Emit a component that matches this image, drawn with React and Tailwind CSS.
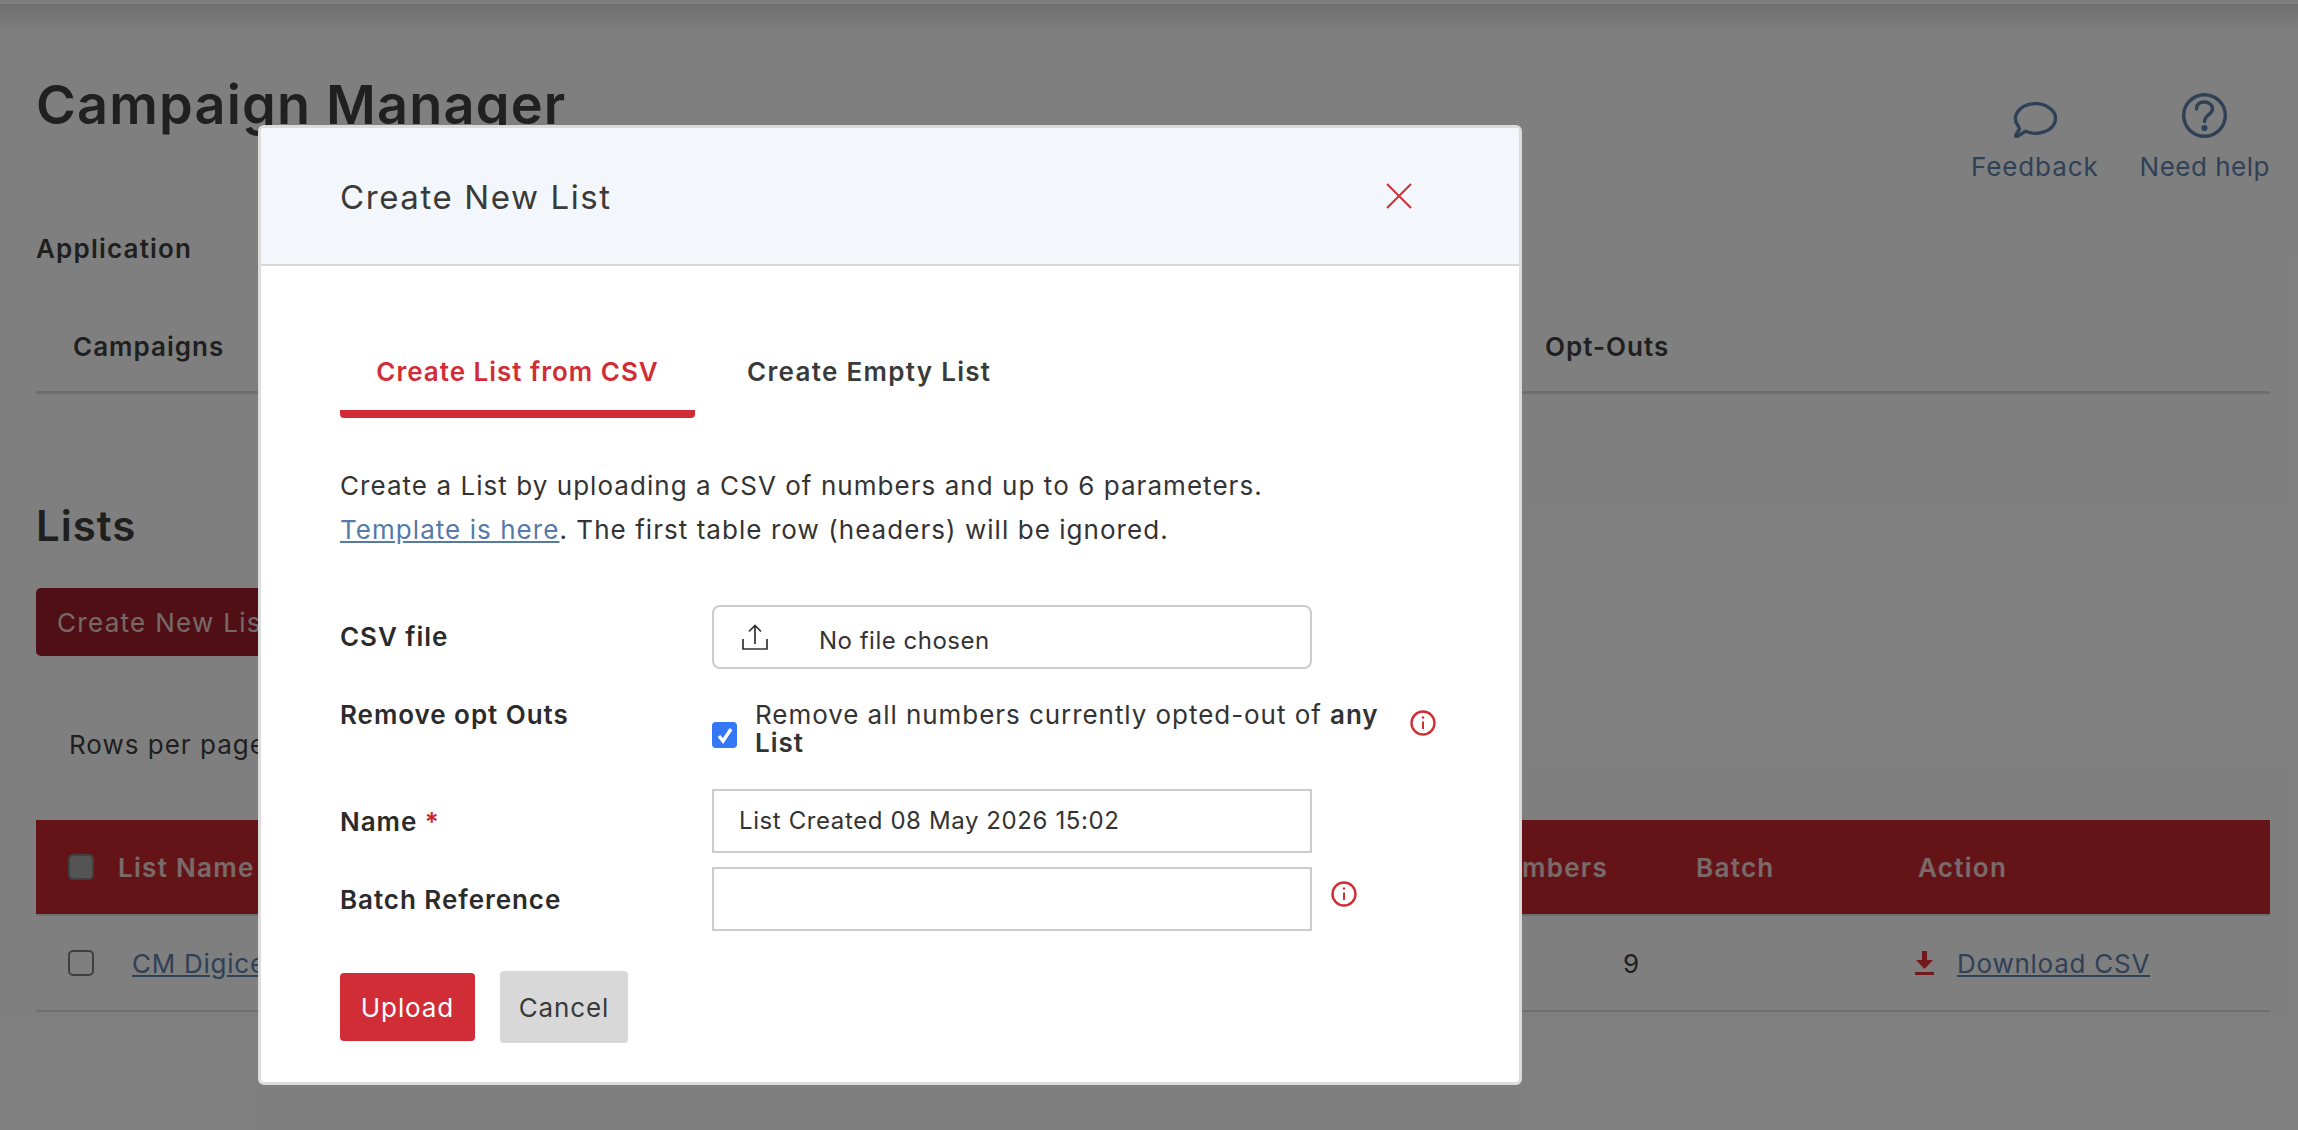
const font = { fontFamily: '"Inter", "Noto Sans", sans-serif' };

function Bubble() {
  return (
    <svg viewBox="0 0 45 36" className="w-[45px] h-[36px]" fill="none" stroke="#5f82ad" strokeWidth="3.4" strokeLinecap="round" strokeLinejoin="round">
      <path d="M13.5 29.3 A20 14.8 0 1 0 6.2 23.9 L7.5 27 L3.8 33 Q3.2 35 5.5 34.3 Z" />
    </svg>
  );
}

function Help() {
  return (
    <svg viewBox="0 0 45 45" className="w-[45px] h-[45px]" fill="none" stroke="#5f82ad" strokeWidth="3.4" strokeLinecap="round">
      <circle cx="22.5" cy="22.5" r="20.8" />
      <path d="M14.5 16 C14.5 11 18 9 22.5 9 C27 9 30.5 12 30.5 16 C30.5 21.5 22.5 22 22.5 28.5" />
      <circle cx="22.5" cy="35" r="1.4" fill="#5f82ad" />
    </svg>
  );
}

function Info({ className }) {
  return (
    <svg viewBox="0 0 26 26" className={"w-[26px] h-[26px] shrink-0 " + className} fill="none" stroke="#d12d37" strokeWidth="2.4">
      <circle cx="13" cy="13" r="11.5" />
      <path d="M13 11.5 V19" strokeWidth="2" />
      <circle cx="13" cy="7.5" r="1.2" fill="#d12d37" stroke="none" />
    </svg>
  );
}

function Upload() {
  return (
    <svg viewBox="0 0 26 26" className="w-[26px] h-[26px] shrink-0" fill="none" stroke="#333" strokeWidth="1.7">
      <path d="M1 15 V25 H25 V15" />
      <path d="M13 20 V1.5 M7 7.5 L13 1.5 L19 7.5" />
    </svg>
  );
}

function DownloadIcon() {
  return (
    <svg viewBox="0 0 19 24" className="w-[19px] h-[24px] shrink-0" fill="#e6303a">
      <path d="M7 0 H12 V9 H18 L9.5 18 L1 9 H7 Z" />
      <rect x="0" y="21" width="19" height="3" />
    </svg>
  );
}

function Background() {
  return (
    <div className="h-[1130px] bg-white overflow-hidden px-[28px] text-[#3e3e3e]">
      <div className="flex justify-between pt-[93px] pl-[8px]">
        <h1 className="text-[54px] leading-[24px] font-semibold tracking-[1.2px] text-[#404040]">Campaign Manager</h1>
        <div className="flex gap-[41px] text-[#5f82ad] text-[26px] leading-[30px]">
          <div className="flex flex-col items-center">
            <div className="h-[45px] flex items-end"><Bubble /></div>
            <span className="mt-[14px] tracking-[0.9px]">Feedback</span>
          </div>
          <div className="flex flex-col items-center">
            <Help />
            <span className="mt-[14px] tracking-[0.5px]">Need help</span>
          </div>
        </div>
      </div>
      <div className="mt-[51px] pl-[8px] text-[26px] leading-[32px] font-semibold tracking-[1.2px]">Application</div>
      <div className="mt-[66px] ml-[8px] h-[63px] border-b-[3px] border-[#dedede] flex text-[26px] font-semibold tracking-[1px] leading-[32px]">
        <span className="ml-[37px] w-[1472px]">Campaigns</span>
        <span>Opt-Outs</span>
      </div>
      <h2 className="mt-[110px] ml-[8px] text-[42px] leading-[44px] font-semibold tracking-[1px]">Lists</h2>
      <button className="mt-[40px] ml-[8px] block w-[280px] h-[68px] rounded-[5px] bg-[#9e1e28] text-left pl-[21px] text-white/80 text-[26px] tracking-[1.3px]">Create New List</button>
      <div className="mt-[73px] ml-[41px] text-[26px] leading-[32px] tracking-[1px]">Rows per page</div>
      <div className="mt-[59px] ml-[8px] h-[96px] border-b-[2px] border-[#dedede] bg-[#c8282f] flex items-center text-[26px] font-semibold text-white/80 tracking-[1.3px]">
        <span className="ml-[32px] w-[26px] h-[26px] rounded-[5px] border-[2px] border-[#808080] bg-[#a8a8a8]" />
        <span className="ml-[24px] w-[1362px]">List Name</span>
        <span className="w-[216px]">Members</span>
        <span className="w-[222px]">Batch</span>
        <span>Action</span>
      </div>
      <div className="ml-[8px] h-[96px] border-b-[2px] border-[#dedede] flex items-center text-[26px] tracking-[0.75px]">
        <span className="ml-[32px] w-[26px] h-[26px] rounded-[5px] border-[2px] border-[#808080]" />
        <a className="ml-[38px] w-[1491px] underline text-[#5f82ad]">CM Digicel</a>
        <span className="w-[292px]">9</span>
        <DownloadIcon />
        <a className="ml-[23px] underline text-[#5f82ad]">Download CSV</a>
      </div>
    </div>
  );
}

function Row({ label, children, className }) {
  return (
    <div className={"flex " + className}>
      <div className="w-[372px] shrink-0 font-semibold text-[26px] tracking-[0.95px] text-[#2b2b2b]">{label}</div>
      {children}
    </div>
  );
}

function Modal() {
  return (
    <div className="w-[1264px] h-[960px] bg-white rounded-[6px] border-[3px] border-[#dcdcdc] overflow-hidden text-[#333]">
      <div className="h-[138px] bg-[#f3f7fb] border-b-[2px] border-[#d8d8d8] flex items-center justify-between pl-[79px] pr-[107px]">
        <span className="pt-[3px] text-[33px] tracking-[1.6px] text-[#3a3a3a]">Create New List</span>
        <svg viewBox="0 0 26 26" className="w-[26px] h-[26px]" fill="none" stroke="#d12d37" strokeWidth="1.9">
          <path d="M1 1 L25 25 M25 1 L1 25" />
        </svg>
      </div>
      <div className="pl-[79px]">
        <div className="mt-[83px] flex text-[26px] font-semibold">
          <div className="w-[355px] h-[69px] border-b-[8px] rounded-b-[4px] border-[#d12d37] text-[#d12d37] text-center leading-[46px] tracking-[1px]">Create List from CSV</div>
          <div className="ml-[52px] leading-[46px] text-[#3a3a3a] tracking-[1.3px]">Create Empty List</div>
        </div>
        <p className="mt-[46px] text-[26px] leading-[44px] tracking-[1.05px]">
          Create a List by uploading a CSV of numbers and up to 6 parameters.<br />
          <a className="underline text-[#567aa8]">Template is here</a>. The first table row (headers) will be ignored.
        </p>
        <Row label={<span className="block mt-[16px] leading-[32px]">CSV file</span>} className="mt-[53px]">
          <div className="w-[600px] h-[64px] rounded-[8px] border-[2px] border-[#cccccc] flex items-center pl-[28px] text-[24px] tracking-[0.5px]">
            <Upload />
            <span className="ml-[51px] mt-[7px]">No file chosen</span>
          </div>
        </Row>
        <Row label={<span className="block leading-[32px] mt-[30px]">Remove opt Outs</span>}>
          <div className="flex w-[724px] mt-[32px]">
            <span className="mt-[21px] w-[25px] h-[26px] rounded-[4px] bg-[#3478f6] flex items-center justify-center shrink-0">
              <svg viewBox="0 0 20 20" className="w-[20px] h-[20px]" fill="none" stroke="white" strokeWidth="3.4"><path d="M4 11 L8 16 L16 4" /></svg>
            </span>
            <div className="ml-[18px] w-[630px] text-[26px] leading-[28px] tracking-[0.95px]">Remove all numbers currently opted-out of <b className="font-semibold">any</b> <b className="font-semibold">List</b></div>
            <Info className="ml-[26px] mt-[9px]" />
          </div>
        </Row>
        <Row label={<span className="block mt-[17px] leading-[32px]">Name <span className="text-[#c8282f]">*</span></span>} className="mt-[32px]">
          <div className="w-[600px] h-[64px] border-[2px] border-[#cccccc] flex items-center pl-[25px] text-[24px] tracking-[0.6px]">List Created 08 May 2026 15:02</div>
        </Row>
        <Row label={<span className="block mt-[17px] leading-[32px]">Batch Reference</span>} className="mt-[14px]">
          <div className="w-[600px] h-[64px] border-[2px] border-[#cccccc]" />
          <Info className="ml-[19px] mt-[14px]" />
        </Row>
        <div className="mt-[40px] flex items-center text-[26px] tracking-[0.9px]">
          <button className="w-[135px] h-[68px] rounded-[4px] bg-[#d12d37] text-white">Upload</button>
          <button className="ml-[25px] w-[128px] h-[72px] rounded-[4px] bg-[#d8d8d8] text-[#3a3a3a]">Cancel</button>
        </div>
      </div>
    </div>
  );
}

export default function App() {
  return (
    <div className="relative w-[2298px] h-[1130px] overflow-hidden" style={font}>
      <Background />
      <div className="absolute inset-0 bg-black/50" />
      <div className="absolute inset-x-0 top-[4px] h-[30px] bg-gradient-to-b from-black/[.12] to-transparent" />
      <div className="absolute left-[258px] top-[125px]"><Modal /></div>
    </div>
  );
}
